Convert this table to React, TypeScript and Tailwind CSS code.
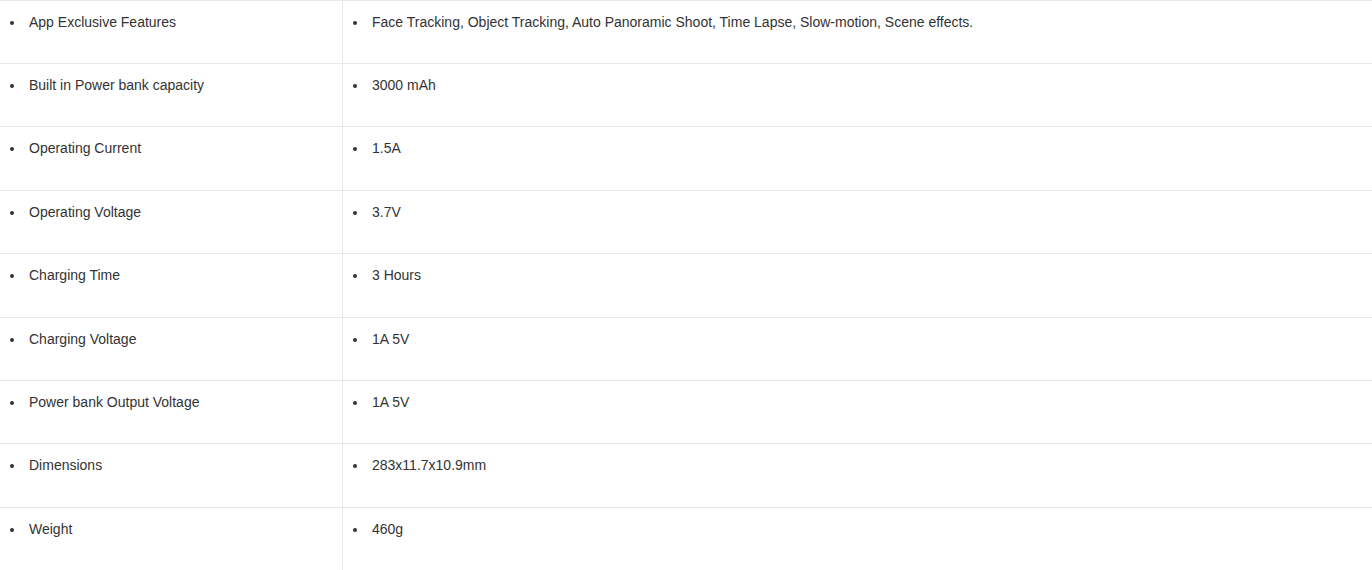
import React from "react";

const rows: [string, string, string][] = [
  ["App Exclusive Features", "Face Tracking, Object Tracking, Auto Panoramic Shoot, Time Lapse, Slow-motion, Scene effects.", "h-[63px]"],
  ["Built in Power bank capacity", "3000 mAh", "h-[63px]"],
  ["Operating Current", "1.5A", "h-[64px]"],
  ["Operating Voltage", "3.7V", "h-[63px]"],
  ["Charging Time", "3 Hours", "h-[64px]"],
  ["Charging Voltage", "1A 5V", "h-[63px]"],
  ["Power bank Output Voltage", "1A 5V", "h-[63px]"],
  ["Dimensions", "283x11.7x10.9mm", "h-[64px]"],
  ["Weight", "460g", "h-[63px]"],
];

function Item({ text }: { text: string }) {
  return (
    <div className="flex items-start pl-[10px] pt-[11px]">
      <span className="mt-[9px] w-[4px] h-[4px] rounded-full bg-[#333] shrink-0" />
      <span className="ml-[15px] leading-[20px]">{text}</span>
    </div>
  );
}

export default function App() {
  return (
    <div
      className="w-[1372px] h-[570px] overflow-hidden bg-white text-[14px] text-[#333]"
      style={{ fontFamily: '"Liberation Sans", Arial, sans-serif' }}
    >
      {rows.map(([k, v, h], i) => (
        <div key={i} className={`grid grid-cols-[343px_1fr] border-t border-[#e8e8e8] ${h}`}>
          <div className="border-r border-[#e8e8e8]">
            <Item text={k} />
          </div>
          <div>
            <Item text={v} />
          </div>
        </div>
      ))}
    </div>
  );
}
